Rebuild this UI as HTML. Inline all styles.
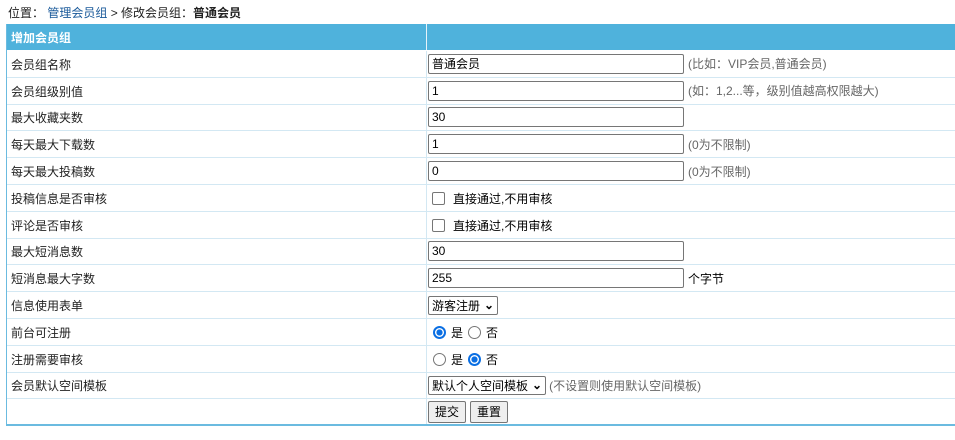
<!DOCTYPE html>
<html><head><meta charset="utf-8"><style>
body{margin:0;width:955px;height:440px;background:#fff;font:12px "Liberation Sans","Noto Sans CJK SC",sans-serif;color:#222;position:relative;overflow:hidden}
.crumb{position:absolute;left:8px;top:4px;font-size:12px}
.crumb a{color:#1a5a9a;text-decoration:none}
.tbl{position:absolute;left:6px;top:24px;width:949px;height:402px;border-left:1px solid #6bbbe0;border-bottom:2px solid #6bbbe0;box-sizing:border-box}
.row{position:absolute;left:0;width:949px;border-bottom:1px solid #d3e8f3;box-sizing:border-box}
.hd{background:#4fb2dc;color:#fff;font-weight:bold;border-bottom:1px solid #fff}
.c1{position:absolute;left:4px;top:1px;bottom:0;display:flex;align-items:center}
.sep{position:absolute;left:419px;top:0;bottom:0;border-left:1px solid #d3e8f3}
.hd .sep{border-left:1px solid #e6f3fa}
.c2{position:absolute;left:421px;top:0;bottom:0;display:flex;align-items:center;color:#666}
.inp{width:256px;height:20px;border:1px solid #767676;border-radius:2px;box-sizing:border-box;padding:2px 3px;color:#000;background:#fff;margin-right:4px;line-height:15px}
.cb{width:13px;height:13px;border:1px solid #767676;border-radius:2px;margin:0 8px 0 4px;box-sizing:border-box}
.rd{width:13px;height:13px;border:1px solid #767676;border-radius:50%;margin:0 5px 0 5px;box-sizing:border-box}
.rd.on{border:2px solid #0b6fe3;background:radial-gradient(#0b6fe3 45%,#fff 52%)}
.sel{border:1px solid #767676;border-radius:2px;padding:1px 3px;color:#000;height:19px;box-sizing:border-box;display:flex;align-items:center;margin-right:3px}
.btn{border:1px solid #767676;border-radius:2px;background:#efefef;color:#000;padding:2px 6px;margin-right:4px;height:22px;box-sizing:border-box;display:flex;align-items:center}
.blk{color:#000}
</style></head><body>
<div class="crumb">位置： <a>管理会员组</a> &gt; 修改会员组：<b>普通会员</b></div>
<div class="tbl">
<div class="row hd" style="top:0;height:27px"><div class="c1">增加会员组</div><div class="sep"></div></div>
<div class="row" style="top:27px;height:26.8px"><div class="c1">会员组名称</div><div class="sep"></div><div class="c2"><div class="inp">普通会员</div>(比如：VIP会员,普通会员)</div></div>
<div class="row" style="top:53.8px;height:26.8px"><div class="c1">会员组级别值</div><div class="sep"></div><div class="c2"><div class="inp">1</div>(如：1,2...等，级别值越高权限越大)</div></div>
<div class="row" style="top:80.6px;height:26.8px"><div class="c1">最大收藏夹数</div><div class="sep"></div><div class="c2"><div class="inp">30</div></div></div>
<div class="row" style="top:107.4px;height:26.8px"><div class="c1">每天最大下载数</div><div class="sep"></div><div class="c2"><div class="inp">1</div>(0为不限制)</div></div>
<div class="row" style="top:134.2px;height:26.8px"><div class="c1">每天最大投稿数</div><div class="sep"></div><div class="c2"><div class="inp">0</div>(0为不限制)</div></div>
<div class="row" style="top:161px;height:26.8px"><div class="c1">投稿信息是否审核</div><div class="sep"></div><div class="c2 blk" style="top:2px"><div class="cb"></div>直接通过,不用审核</div></div>
<div class="row" style="top:187.8px;height:26.8px"><div class="c1">评论是否审核</div><div class="sep"></div><div class="c2 blk" style="top:2px"><div class="cb"></div>直接通过,不用审核</div></div>
<div class="row" style="top:214.6px;height:26.8px"><div class="c1">最大短消息数</div><div class="sep"></div><div class="c2"><div class="inp">30</div></div></div>
<div class="row" style="top:241.4px;height:26.8px"><div class="c1">短消息最大字数</div><div class="sep"></div><div class="c2 blk"><div class="inp">255</div>个字节</div></div>
<div class="row" style="top:268.2px;height:26.8px"><div class="c1">信息使用表单</div><div class="sep"></div><div class="c2"><div class="sel">游客注册 <b style="margin-left:4px">⌄</b></div></div></div>
<div class="row" style="top:295px;height:26.8px"><div class="c1">前台可注册</div><div class="sep"></div><div class="c2 blk" style="top:2px"><div class="rd on"></div>是<div class="rd"></div>否</div></div>
<div class="row" style="top:321.8px;height:26.8px"><div class="c1">注册需要审核</div><div class="sep"></div><div class="c2 blk" style="top:2px"><div class="rd"></div>是<div class="rd on"></div>否</div></div>
<div class="row" style="top:348.6px;height:26.8px"><div class="c1">会员默认空间模板</div><div class="sep"></div><div class="c2"><div class="sel">默认个人空间模板 <b style="margin-left:4px">⌄</b></div>(不设置则使用默认空间模板)</div></div>
<div class="row" style="top:375.4px;height:24.6px;border-bottom:none"><div class="c1"></div><div class="sep"></div><div class="c2"><div class="btn">提交</div><div class="btn">重置</div></div></div>
</div>
</body></html>
